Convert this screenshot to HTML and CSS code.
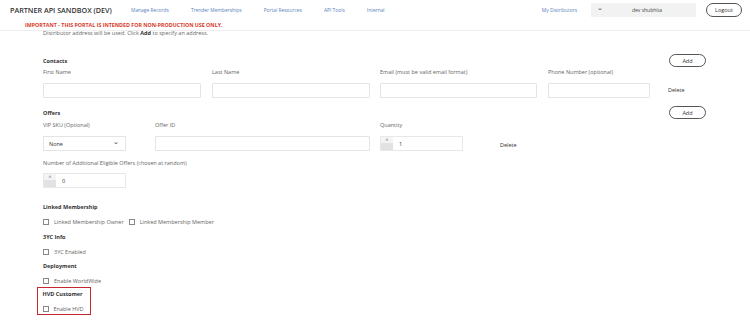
FILE: index.html
```html
<!DOCTYPE html>
<html lang="en">
<head>
    <meta charset="UTF-8">
    <title>Partner API Sandbox</title>
    <link rel="stylesheet" href="styles.css">
</head>
<body>
    <!-- Top bar -->
    <header class="topbar">
        <div class="brand">PARTNER API SANDBOX (DEV)</div>
        <nav class="nav">
            <a href="#">Manage Records</a>
            <a href="#">Trender Memberships</a>
            <a href="#">Portal Resources</a>
            <a href="#">API Tools</a>
            <a href="#">Internal</a>
        </nav>
        <div class="user-area">
            <a href="#" class="my-dist">My Distributors</a>
            <div class="user-select">
                <span class="chev">&#8964;</span>
                <span class="user-name">dev shubhita</span>
            </div>
            <button class="pill-btn">Logout</button>
        </div>
    </header>
    <div class="warning">IMPORTANT - THIS PORTAL IS INTENDED FOR NON-PRODUCTION USE ONLY.</div>

    <main class="content">
        <p class="hint">Distributor address will be used. Click <b>Add</b> to specify an address.</p>

        <!-- Contacts -->
        <section class="block contacts">
            <div class="block-head">
                <h3>Contacts</h3>
                <button class="pill-btn">Add</button>
            </div>
            <div class="row contact-row">
                <div class="field w158">
                    <label>First Name</label>
                    <input type="text">
                </div>
                <div class="field w158">
                    <label>Last Name</label>
                    <input type="text">
                </div>
                <div class="field w157">
                    <label>Email (must be valid email format)</label>
                    <input type="text">
                </div>
                <div class="field w102">
                    <label>Phone Number (optional)</label>
                    <input type="text">
                </div>
                <span class="delete">Delete</span>
            </div>
        </section>

        <!-- Offers -->
        <section class="block offers">
            <div class="block-head">
                <h3>Offers</h3>
                <button class="pill-btn">Add</button>
            </div>
            <div class="row offer-row">
                <div class="field w83">
                    <label>VIP SKU (Optional)</label>
                    <div class="select-box">None <span class="chev">&#8964;</span></div>
                </div>
                <div class="field w215 offer-id">
                    <label>Offer ID</label>
                    <input type="text">
                </div>
                <div class="field w83 quantity">
                    <label>Quantity</label>
                    <div class="stepper"><span class="step-btn">&#708;</span><span class="step-val">1</span></div>
                </div>
                <span class="delete">Delete</span>
            </div>
            <div class="field extra">
                <label>Number of Additional Eligible Offers (chosen at random)</label>
                <div class="stepper"><span class="step-btn">&#708;</span><span class="step-val">0</span></div>
            </div>
        </section>

        <!-- Options -->
        <section class="options">
            <h3>Linked Membership</h3>
            <div class="check-row">
                <label class="check"><span class="box"></span>Linked Membership Owner</label>
                <label class="check"><span class="box"></span>Linked Membership Member</label>
            </div>
            <h3>3YC Info</h3>
            <div class="check-row">
                <label class="check"><span class="box"></span>3YC Enabled</label>
            </div>
            <h3>Deployment</h3>
            <div class="check-row">
                <label class="check"><span class="box"></span>Enable WorldWide</label>
            </div>
            <div class="highlight">
                <h3>HVD Customer</h3>
                <div class="check-row">
                    <label class="check"><span class="box"></span>Enable HVD</label>
                </div>
            </div>
        </section>
    </main>
</body>
</html>
```

FILE: styles.css
```css
/* General */
body {
    margin: 0;
    font-family: "Open Sans", Arial, sans-serif;
    font-size: 5.5px;
    color: #666;
    background-color: #fff;
    overflow: hidden;
}

/* Top bar */
.topbar {
    display: flex;
    align-items: center;
    height: 19px;
    padding: 0 8px 0 10px;
}

.brand {
    font-size: 7.2px;
    font-weight: 600;
    color: #333;
    width: 121px;
}

.nav {
    display: flex;
    gap: 22px;
}

.nav a,
.my-dist {
    color: #5a7fc0;
    text-decoration: none;
    font-size: 4.9px;
}

.user-area {
    margin-left: auto;
    display: flex;
    align-items: center;
}

.my-dist {
    margin-right: 14px;
}

.user-select {
    width: 105px;
    height: 14px;
    background-color: #f2f2f2;
    display: flex;
    align-items: center;
    position: relative;
}

.user-select .chev {
    margin-left: 6px;
    font-size: 7px;
    line-height: 7px;
    margin-top: -4px;
    color: #444;
}

.user-name {
    position: absolute;
    left: 41px;
    color: #444;
    font-size: 5px;
}

.pill-btn {
    font-family: inherit;
    font-size: 5.5px;
    color: #333;
    background: #fff;
    border: 1px solid #555;
    border-radius: 8px;
    height: 14px;
    width: 36px;
    padding: 0;
}

.user-area .pill-btn {
    margin-left: 10px;
}

.warning {
    color: #d93a2b;
    font-weight: 700;
    font-size: 5.3px;
    padding: 2px 0 0 25px;
    height: 9px;
    border-bottom: 1px solid #eee;
}

/* Content */
.content {
    padding: 0 44px 0 43px;
}

.hint {
    margin: -1px 0 0;
    height: 7px;
    line-height: 7px;
    overflow: hidden;
    color: #666;
}

.hint b {
    color: #333;
}

h3 {
    margin: 0;
    font-size: 5.5px;
    font-weight: 700;
    color: #333;
}

.block-head {
    display: flex;
    justify-content: space-between;
    align-items: center;
    margin-bottom: 1px;
}

.block-head .pill-btn {
    height: 13px;
    width: 37px;
}

.contacts {
    margin-top: 17px;
}

.field {
    display: flex;
    flex-direction: column;
}

.field label {
    height: 15px;
}

.w158 { width: 158px; }
.w157 { width: 157px; }
.w102 { width: 102px; }
.w83 { width: 83px; }
.w215 { width: 215px; }

input[type="text"] {
    box-sizing: border-box;
    height: 15px;
    border: 1px solid #e4e4e4;
    border-radius: 1px;
    margin: 0;
    padding: 0;
}

.row {
    display: flex;
    align-items: flex-end;
}

.contact-row {
    gap: 10px;
}

.contact-row .field:nth-child(2),
.contact-row .field:nth-child(4) {
    margin-left: 1px;
}

.delete {
    color: #333;
}

.contact-row .delete {
    margin-left: 8px;
    padding-bottom: 4px;
}

.offers {
    margin-top: 8px;
}

.offers .block-head {
    margin-bottom: 2px;
}

.offer-id {
    margin-left: 29px;
}

.quantity {
    margin-left: 10px;
}

.offer-row .delete {
    margin-left: 37px;
    padding-bottom: 2px;
}

.select-box {
    box-sizing: border-box;
    height: 15px;
    border: 1px solid #e4e4e4;
    display: flex;
    align-items: center;
    justify-content: space-between;
    padding: 0 6px 0 5px;
    color: #333;
}

.select-box .chev {
    font-size: 7px;
    line-height: 7px;
    margin-top: -4px;
}

.stepper {
    box-sizing: border-box;
    height: 15px;
    width: 83px;
    border: 1px solid #e8e8e8;
    display: flex;
    align-items: center;
}

.step-btn {
    width: 12px;
    height: 13px;
    background: linear-gradient(#f4f4f4 50%, #e2e2e2 50%);
    font-size: 5px;
    text-align: center;
    line-height: 7px;
    color: #666;
}

.step-val {
    margin-left: 6px;
    color: #333;
}

.extra {
    margin-top: 8px;
    width: 200px;
}

.extra label {
    height: 14px;
}

/* Options */
.options {
    margin-top: 15px;
}

.options h3 {
    height: 15px;
}

.check-row {
    display: flex;
    gap: 5px;
    height: 14.5px;
}

.check {
    display: flex;
    align-items: flex-start;
    color: #666;
}

.box {
    box-sizing: border-box;
    width: 6px;
    height: 6px;
    border: 1px solid #888;
    margin-right: 5px;
    margin-top: 1px;
}

.highlight {
    box-sizing: border-box;
    margin: -5px 0 0 -6px;
    width: 54px;
    height: 28px;
    padding: 2.5px 0 0 4.5px;
    border: 1.5px solid #c4282e;
}

.highlight .check-row {
    height: auto;
}
```
